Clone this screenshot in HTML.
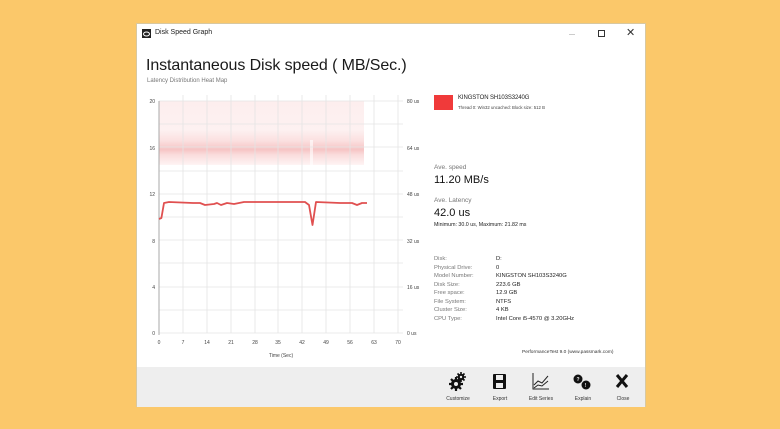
<!DOCTYPE html>
<html><head><meta charset="utf-8"><style>
*{margin:0;padding:0;box-sizing:border-box}
body{width:780px;height:429px;background:#fbc86a;font-family:"Liberation Sans",sans-serif;position:relative;overflow:hidden;color:#222}
.win{position:absolute;left:136px;top:23px;width:510px;height:384px;background:#fff;border:1px solid #d8c8a0}
.t{position:absolute;white-space:nowrap}
</style></head><body>
<div class="win">
<svg class="t" style="left:5px;top:5px" width="9" height="9" viewBox="0 0 9 9"><rect width="9" height="9" fill="#222"/><ellipse cx="4.5" cy="5" rx="3" ry="2" fill="none" stroke="#fff" stroke-width="1"/></svg>
<div class="t" style="left:18px;top:5px;font-size:7px;color:#222">Disk Speed Graph</div>
<div class="t" style="left:432px;top:10px;width:6px;height:1px;background:#ccc"></div>
<div class="t" style="left:461px;top:6px;width:7px;height:7px;border:1px solid #333"></div>
<div class="t" style="left:489px;top:2px;font-size:11px;color:#333">✕</div>
<div class="t" style="left:9px;top:33px;font-size:16px;color:#1a1a1a;letter-spacing:-0.1px">Instantaneous Disk speed ( MB/Sec.)</div>
<div class="t" style="left:10px;top:54px;font-size:6px;color:#777">Latency Distribution Heat Map</div>
</div>
<svg style="position:absolute;left:0;top:0" width="780" height="429">
<defs><linearGradient id="h" x1="0" y1="0" x2="0" y2="1">
<stop offset="0" stop-color="#fdeeee"/><stop offset="0.45" stop-color="#fdf1f1"/><stop offset="0.62" stop-color="#fbe0e0"/><stop offset="0.76" stop-color="#f6c4c4"/><stop offset="0.84" stop-color="#fadcdc"/><stop offset="1" stop-color="#fef4f4"/></linearGradient></defs>
<rect x="159" y="101" width="205" height="64" fill="url(#h)"/>
<rect x="310" y="140" width="3" height="25" fill="#fff" opacity="0.6"/>
<g stroke="#e4e4e4" stroke-width="0.8">
<line x1="159" y1="101" x2="159" y2="333"/><line x1="183" y1="95" x2="183" y2="333"/><line x1="207" y1="95" x2="207" y2="333"/><line x1="231" y1="95" x2="231" y2="333"/><line x1="255" y1="95" x2="255" y2="333"/><line x1="278" y1="95" x2="278" y2="333"/><line x1="302" y1="95" x2="302" y2="333"/><line x1="326" y1="95" x2="326" y2="333"/><line x1="350" y1="95" x2="350" y2="333"/><line x1="374" y1="95" x2="374" y2="333"/><line x1="398" y1="95" x2="398" y2="333"/>
<line x1="159" y1="101" x2="403" y2="101"/><line x1="159" y1="124" x2="403" y2="124"/><line x1="159" y1="147" x2="403" y2="147"/><line x1="159" y1="171" x2="403" y2="171"/><line x1="159" y1="194" x2="403" y2="194"/><line x1="159" y1="217" x2="403" y2="217"/><line x1="159" y1="240" x2="403" y2="240"/><line x1="159" y1="263" x2="403" y2="263"/><line x1="159" y1="287" x2="403" y2="287"/><line x1="159" y1="310" x2="403" y2="310"/><line x1="159" y1="333" x2="403" y2="333"/>
</g>
<line x1="159" y1="101" x2="159" y2="335" stroke="#999" stroke-width="0.8"/>
<polyline fill="none" stroke="#e05050" stroke-width="1.8" stroke-linejoin="round" points="159,219 161.4,218 164,203 169,202 193,203 200,203 205,205 214,204 217,203 221,205 227,203 234,204 244,202 254,202 305,202 309,205 312.5,225 316,202 340,203 352,203 357,205 362,203 367,203"/>
<g font-size="5" fill="#444" font-family="Liberation Sans">
<text x="155" y="103" text-anchor="end">20</text><text x="155" y="150" text-anchor="end">16</text><text x="155" y="196" text-anchor="end">12</text><text x="155" y="243" text-anchor="end">8</text><text x="155" y="289" text-anchor="end">4</text><text x="155" y="335" text-anchor="end">0</text>
<text x="407" y="103">80 us</text><text x="407" y="150">64 us</text><text x="407" y="196">48 us</text><text x="407" y="243">32 us</text><text x="407" y="289">16 us</text><text x="407" y="335">0 us</text>
<g text-anchor="middle"><text x="159" y="344">0</text><text x="183" y="344">7</text><text x="207" y="344">14</text><text x="231" y="344">21</text><text x="255" y="344">28</text><text x="278" y="344">35</text><text x="302" y="344">42</text><text x="326" y="344">49</text><text x="350" y="344">56</text><text x="374" y="344">63</text><text x="398" y="344">70</text>
<text x="281" y="357">Time (Sec)</text></g>
</g>
</svg>
<div class="t" style="left:434px;top:95px;width:19px;height:15px;background:#f03a3a"></div>
<div class="t" style="left:458px;top:95px;font-size:6px;letter-spacing:-0.1px">KINGSTON SH103S3240G</div>
<div class="t" style="left:458px;top:105px;font-size:4.3px;color:#444">Thread 0: Win32 uncached: Block size: 512 B</div>
<div class="t" style="left:434px;top:164px;font-size:6.5px;color:#777">Ave. speed</div>
<div class="t" style="left:434px;top:174px;font-size:11px;color:#111">11.20 MB/s</div>
<div class="t" style="left:434px;top:197px;font-size:6.5px;color:#777">Ave. Latency</div>
<div class="t" style="left:434px;top:207px;font-size:11px;color:#111">42.0 us</div>
<div class="t" style="left:434px;top:222px;font-size:5.3px;color:#222">Minimum: 30.0 us, Maximum: 21.82 ms</div>
<div class="t" style="left:434px;top:255px;font-size:5.8px;color:#777;line-height:8.5px">Disk:<br>Physical Drive:<br>Model Number:<br>Disk Size:<br>Free space:<br>File System:<br>Cluster Size:<br>CPU Type:</div>
<div class="t" style="left:496px;top:255px;font-size:5.8px;color:#222;line-height:8.5px">D:<br>0<br>KINGSTON SH103S3240G<br>223.6 GB<br>12.9 GB<br>NTFS<br>4 KB<br>Intel Core i5-4570 @ 3.20GHz</div>
<div class="t" style="left:522px;top:350px;font-size:4.8px;color:#333">PerformanceTest 9.0 (www.passmark.com)</div>
<div style="left:137px;top:367px;width:508px;height:40px;position:absolute;background:#eeeeee"></div>
<svg style="position:absolute;left:430px;top:367px" width="215" height="40">
<g fill="#111">
<g stroke="#111" stroke-width="2.2"><path d="M26 10 V24 M19 17 H33 M21 12 L31 22 M31 12 L21 22"/><path d="M31 5 V15 M26 10 H36 M27.5 6.5 L34.5 13.5 M34.5 6.5 L27.5 13.5" stroke-width="1.6"/></g>
<circle cx="26" cy="17" r="5"/><circle cx="26" cy="17" r="2" fill="#eee"/>
<circle cx="31" cy="10" r="3.3"/><circle cx="31" cy="10" r="1.2" fill="#eee"/>
<rect x="63" y="7" width="13" height="15" rx="1"/><rect x="66" y="8" width="7" height="5" fill="#eee"/><rect x="66" y="16" width="7" height="5" fill="#eee"/>
<circle cx="148" cy="12" r="4.5"/><circle cx="156" cy="18" r="4.5"/>
<text x="146.5" y="14" font-size="5" fill="#eee" font-weight="bold">?</text><text x="154.5" y="20" font-size="5" fill="#eee" font-weight="bold">!</text>
<path d="M187 8 L197 20 M197 8 L187 20" stroke="#111" stroke-width="3" fill="none"/>
</g>
<g fill="none" stroke="#222" stroke-width="1">
<path d="M103 6 V22 H119"/><path d="M104 18 L108 14 L112 16 L118 9"/><path d="M104 21 L108 18 L112 19 L118 14"/>
</g>
<g font-size="5" fill="#333" font-family="Liberation Sans" text-anchor="middle">
<text x="28" y="33">Customize</text><text x="70" y="33">Export</text><text x="111" y="33">Edit Series</text><text x="153" y="33">Explain</text><text x="193" y="33">Close</text>
</g>
</svg>
</body></html>
